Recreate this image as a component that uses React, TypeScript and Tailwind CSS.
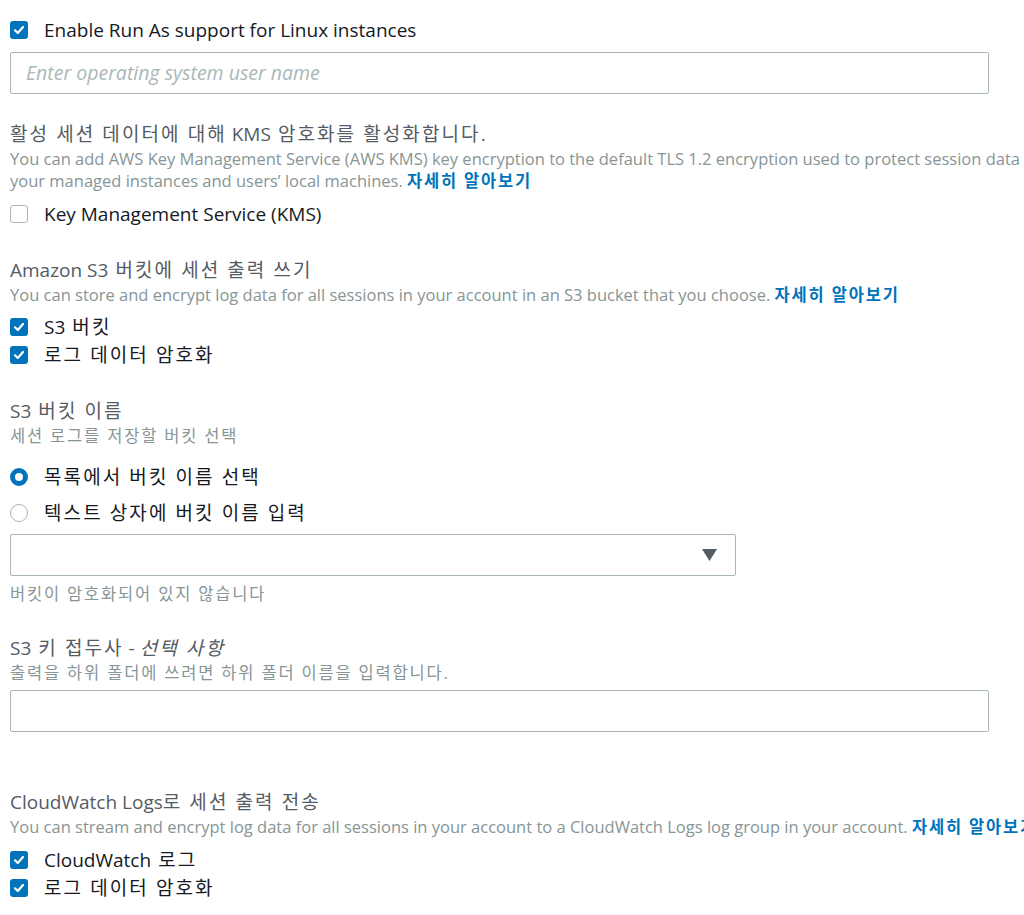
import React from "react";

const latin = "font-['Open_Sans','Noto_Sans_CJK_KR',sans-serif]";

// Hangul runs (and the space before them) get a little tracking so they sit as wide as in the reference
function ko(text: string) {
    const parts = text.split(/( ?[\uAC00-\uD7A3](?:[\uAC00-\uD7A3 ]*[\uAC00-\uD7A3])?)/);
    return parts.map((p, i) =>
        /[\uAC00-\uD7A3]/.test(p) ? (
            <span key={i} className="tracking-[0.11em]">
                {p}
            </span>
        ) : (
            <React.Fragment key={i}>{p}</React.Fragment>
        )
    );
}

function CheckBox({ checked }: { checked: boolean }) {
    if (!checked) {
        return <span className="block w-[18px] h-[18px] rounded-[3px] border border-[#aab7b8] bg-white shrink-0" />;
    }
    return (
        <span className="flex items-center justify-center w-[18px] h-[18px] rounded-[3px] bg-[#0073bb] shrink-0">
            <svg width="12" height="12" viewBox="0 0 12 12" fill="none">
                <path d="M2 6.3 L4.8 9 L10 3" stroke="white" strokeWidth="2.2" strokeLinecap="round" strokeLinejoin="round" />
            </svg>
        </span>
    );
}

function Radio({ checked }: { checked: boolean }) {
    return checked ? (
        <span className="block w-[18px] h-[18px] rounded-full border-[5px] border-[#0073bb] bg-white shrink-0" />
    ) : (
        <span className="block w-[18px] h-[18px] rounded-full border border-[#aab7b8] bg-white shrink-0" />
    );
}

function CheckRow({ checked, label }: { checked: boolean; label: string }) {
    return (
        <div className="flex items-center h-[28px]">
            <CheckBox checked={checked} />
            <span className="ml-[16px] text-[19px] text-[#16191f] leading-none whitespace-nowrap">{ko(label)}</span>
        </div>
    );
}

function RadioRow({ checked, label }: { checked: boolean; label: string }) {
    return (
        <div className="flex items-center h-[36px]">
            <Radio checked={checked} />
            <span className="ml-[16px] text-[19px] text-[#16191f] leading-none whitespace-nowrap">{ko(label)}</span>
        </div>
    );
}

function Heading({ children }: { children: React.ReactNode }) {
    return <div className="text-[19px] leading-[26px] mb-[1px] text-[#545b64] whitespace-nowrap">{children}</div>;
}

function Desc({ children }: { children: React.ReactNode }) {
    return <div className="text-[16.5px] leading-[22px] text-[#879596] whitespace-nowrap">{children}</div>;
}

function Learn() {
    return <a className="font-bold text-[#0073bb]">{ko("자세히 알아보기")}</a>;
}

export default function App() {
    return (
        <div className={`w-[1024px] h-[915px] overflow-hidden bg-white ${latin}`}>
            <div className="w-[1060px] pl-[10px]">
                <div className="pt-[16px]">
                    <CheckRow checked label="Enable Run As support for Linux instances" />
                    <div className="mt-[8px] w-[979px] h-[42px] border border-[#aab7b8] rounded-[2px] flex items-center px-[15px]">
                        <span className="italic text-[19.5px] text-[#aab7b8]">Enter operating system user name</span>
                    </div>
                </div>

                <div className="mt-[27px]">
                    <Heading>{ko("활성 세션 데이터에 대해 KMS 암호화를 활성화합니다.")}</Heading>
                    <Desc>
                        You can add AWS Key Management Service (AWS KMS) key encryption to the default TLS 1.2 encryption used to protect session data between
                        <br />
                        your managed instances and users’ local machines. <Learn />
                    </Desc>
                    <div className="mt-[8px]">
                        <CheckRow checked={false} label="Key Management Service (KMS)" />
                    </div>
                </div>

                <div className="mt-[29px]">
                    <Heading>{ko("Amazon S3 버킷에 세션 출력 쓰기")}</Heading>
                    <Desc>
                        You can store and encrypt log data for all sessions in your account in an S3 bucket that you choose. <Learn />
                    </Desc>
                    <div className="mt-[7px]">
                        <CheckRow checked label="S3 버킷" />
                        <CheckRow checked label="로그 데이터 암호화" />
                    </div>
                </div>

                <div className="mt-[29px]">
                    <Heading>{ko("S3 버킷 이름")}</Heading>
                    <Desc>{ko("세션 로그를 저장할 버킷 선택")}</Desc>
                    <div className="mt-[12px]">
                        <RadioRow checked label="목록에서 버킷 이름 선택" />
                        <RadioRow checked={false} label="텍스트 상자에 버킷 이름 입력" />
                    </div>
                    <div className="mt-[3px] w-[726px] h-[42px] border border-[#aab7b8] rounded-[2px] flex items-center justify-end pr-[18px]">
                        <svg width="15" height="12" viewBox="0 0 15 12">
                            <path d="M0 0 H15 L7.5 12 Z" fill="#545b64" />
                        </svg>
                    </div>
                    <div className="mt-[7px]">
                        <Desc>{ko("버킷이 암호화되어 있지 않습니다")}</Desc>
                    </div>
                </div>

                <div className="mt-[30px]">
                    <Heading>
                        {ko("S3 키 접두사 - ")}
                        <i>{ko("선택 사항")}</i>
                    </Heading>
                    <Desc>{ko("출력을 하위 폴더에 쓰려면 하위 폴더 이름을 입력합니다.")}</Desc>
                    <div className="mt-[6px] w-[979px] h-[42px] border border-[#aab7b8] rounded-[2px]" />
                </div>

                <div className="mt-[57px]">
                    <Heading>{ko("CloudWatch Logs로 세션 출력 전송")}</Heading>
                    <Desc>
                        You can stream and encrypt log data for all sessions in your account to a CloudWatch Logs log group in your account. <Learn />
                    </Desc>
                    <div className="mt-[8px]">
                        <CheckRow checked label="CloudWatch 로그" />
                        <CheckRow checked label="로그 데이터 암호화" />
                    </div>
                </div>
            </div>
        </div>
    );
}
